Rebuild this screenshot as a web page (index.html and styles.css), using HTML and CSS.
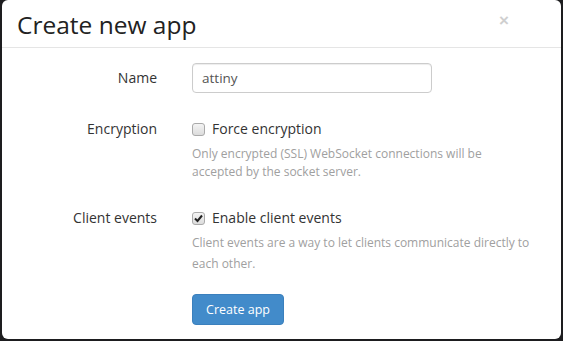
FILE: index.html
```html
<!DOCTYPE html>
<html>
<head>
<meta charset="utf-8">
<link rel="stylesheet" href="styles.css">
</head>
<body>
<div class="modal">
  <div class="modal-header">
    <h1 class="title">Create new app</h1>
    <span class="close">×</span>
  </div>
  <div class="modal-body">
    <div class="row row-name">
      <label class="label">Name</label>
      <div class="control">
        <input class="input" type="text" value="attiny">
      </div>
    </div>
    <div class="row row-enc">
      <label class="label">Encryption</label>
      <div class="control">
        <label class="check"><span class="box"></span>Force encryption</label>
        <p class="help">Only encrypted (SSL) WebSocket connections will be accepted by the socket server.</p>
      </div>
    </div>
    <div class="row row-client">
      <label class="label">Client events</label>
      <div class="control">
        <label class="check"><span class="box checked"><svg width="9" height="9" viewBox="0 0 9 9"><path d="M1 4.5 L3.5 7 L8 1.5" fill="none" stroke="#222" stroke-width="2"/></svg></span>Enable client events</label>
        <p class="help help2">Client events are a way to let clients communicate directly to each other.</p>
      </div>
    </div>
    <div class="row row-btn">
      <div class="label"></div>
      <div class="control">
        <button class="btn">Create app</button>
      </div>
    </div>
  </div>
</div>
</body>
</html>
```
FILE: styles.css
```css
html, body {
  margin: 0;
  padding: 0;
  background: #1d1d1f;
  height: 341px;
  overflow: hidden;
}
.modal {
  margin-left: 2px;
  width: 559px;
  height: 339px;
  background: #fff;
  border-radius: 6px;
  font-family: "Open Sans", sans-serif;
  color: #333;
}
.modal-header {
  height: 48px;
  border-bottom: 1px solid #e5e5e5;
  display: flex;
  align-items: flex-start;
  justify-content: space-between;
  padding: 0 52px 0 15px;
  box-sizing: border-box;
  width: 100%;
}
.title {
  margin: 8px 0 0 0;
  font-size: 24.5px;
  font-weight: 400;
  line-height: 34px;
  color: #222;
}
.close {
  margin-top: 8px;
  font-size: 17px;
  line-height: 26px;
  color: #cfcfcf;
  font-weight: 700;
  font-family: "Liberation Sans", sans-serif;
}
.modal-body {
  padding-top: 15px;
}
.row {
  display: grid;
  grid-template-columns: 155px 240px;
  column-gap: 35px;
}
.label {
  text-align: right;
  font-size: 14px;
  color: #333;
}
.row-name .label {
  line-height: 30px;
}
.input {
  display: block;
  width: 240px;
  height: 30px;
  box-sizing: border-box;
  border: 1px solid #ccc;
  border-radius: 4px;
  padding: 0 9px;
  font-family: "Open Sans", sans-serif;
  font-size: 13.5px;
  color: #555;
  box-shadow: inset 0 1px 1px rgba(0,0,0,0.075);
}
.row-enc {
  margin-top: 26px;
  grid-template-columns: 155px 340px;
}
.row-client {
  margin-top: 27px;
  grid-template-columns: 155px 340px;
}
.row-enc .label, .row-client .label {
  line-height: 20px;
}
.check {
  display: flex;
  align-items: center;
  font-size: 14px;
  line-height: 20px;
  color: #333;
}
.box {
  width: 11px;
  height: 11px;
  border: 1px solid #aaa;
  border-radius: 3px;
  background: linear-gradient(#f4f4f4, #dcdcdc);
  margin-right: 7px;
  display: flex;
  align-items: center;
  justify-content: center;
}
.help {
  margin: 6px 0 0 0;
  font-size: 12px;
  line-height: 18px;
  color: #a0a0a0;
}
.help2 {
  line-height: 21px;
  margin-top: 4px;
}
.row-btn {
  margin-top: 20px;
}
.btn {
  width: 92px;
  height: 31px;
  background: #428bca;
  border: 1px solid #3b80bd;
  border-radius: 4px;
  color: #fff;
  font-family: "Open Sans", sans-serif;
  font-size: 12.5px;
  padding: 0;
}
```
